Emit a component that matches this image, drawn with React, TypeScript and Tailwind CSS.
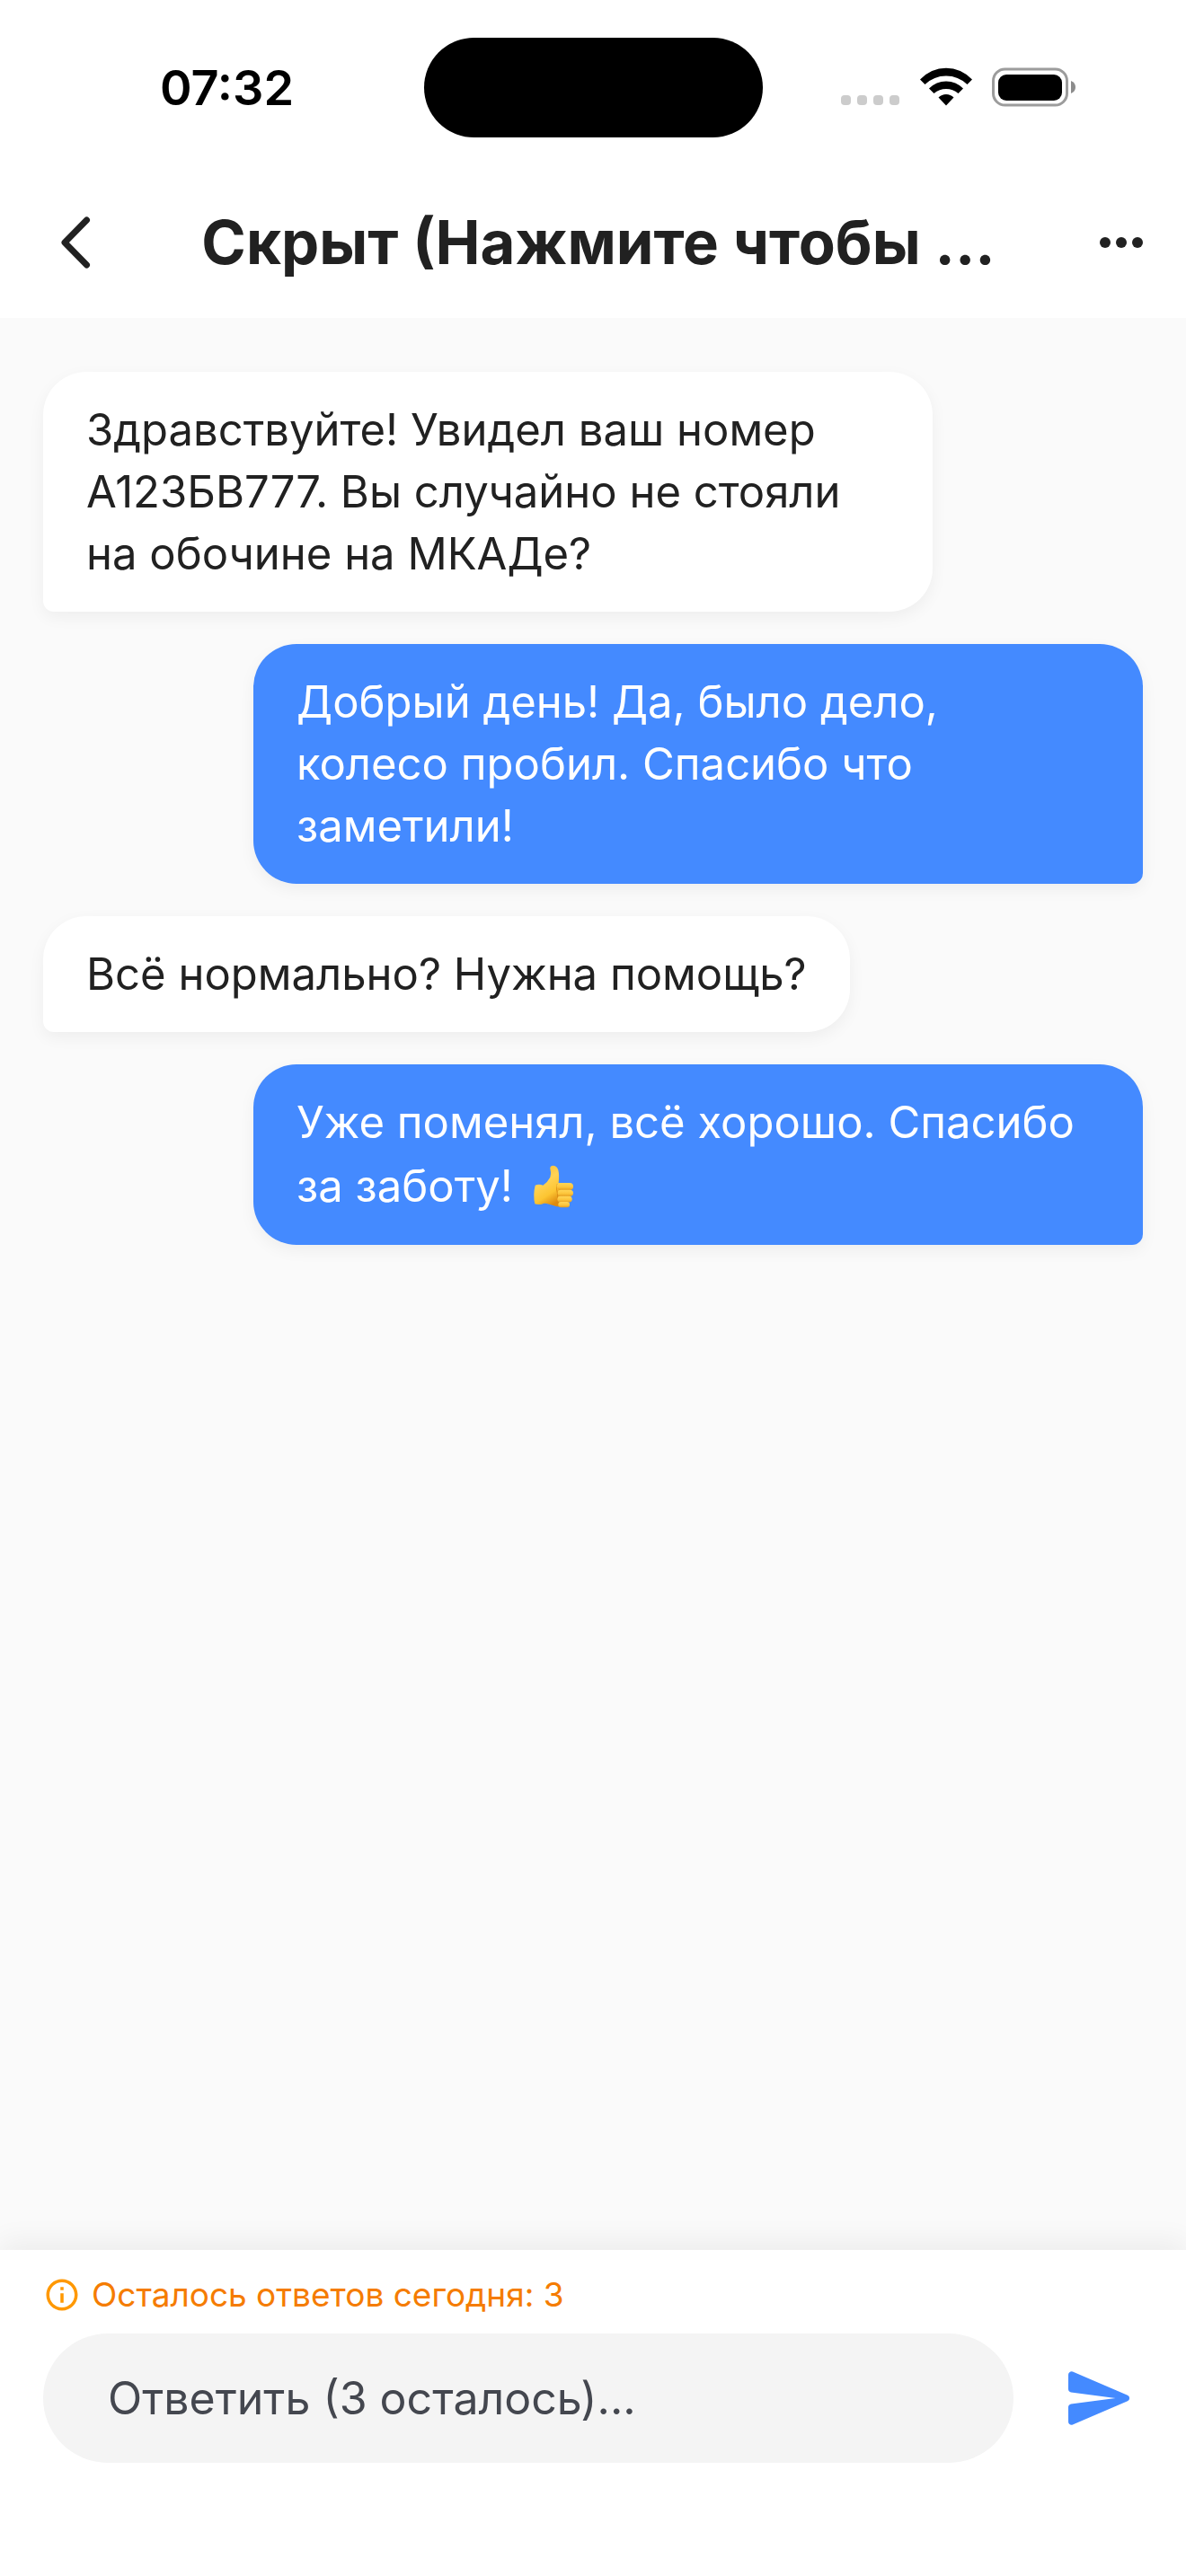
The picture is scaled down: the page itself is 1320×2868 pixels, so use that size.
import React, { useState } from 'react';

type Message = {
  id: number;
  text: string;
  mine?: boolean;
  thumb?: boolean;
};

const messages: Message[] = [
  { id: 1, text: 'Здравствуйте! Увидел ваш номер А123БВ777. Вы случайно не стояли на\u00a0обочине на МКАДе?' },
  { id: 2, text: 'Добрый день! Да, было дело, колесо\u00a0пробил. Спасибо что заметили!', mine: true },
  { id: 3, text: 'Всё нормально? Нужна помощь?' },
  { id: 4, text: 'Уже поменял, всё хорошо. Спасибо за\u00a0заботу!', mine: true, thumb: true },
];

const ThumbsUp: React.FC = () => (
  <svg viewBox="60 12 162 216" className="ml-1 inline h-[72px] w-[54px] align-[-18px]" role="img" aria-label="Палец вверх">
    <defs>
      <linearGradient id="hand" x1="0" y1="0" x2="0.5" y2="1">
        <stop offset="0" stopColor="#f7b92f" />
        <stop offset="0.45" stopColor="#ffd355" />
        <stop offset="0.75" stopColor="#fcc532" />
        <stop offset="1" stopColor="#de8a10" />
      </linearGradient>
      <linearGradient id="finger" x1="0" y1="0" x2="0" y2="1">
        <stop offset="0" stopColor="#ffd657" />
        <stop offset="0.6" stopColor="#fcc43a" />
        <stop offset="1" stopColor="#e39a1c" />
      </linearGradient>
    </defs>
    <path
      d="M80 119 Q92 114 106 119 Q122 108 130 92 Q135 78 130 64 Q128 54 141 53 Q153 54 157 68 Q161 85 158 111 L176 116 L180 188 Q158 194 142 187 Q128 183 118 180 Q110 177 102 182 Q88 185 79 181 Q72 152 80 119Z"
      fill="url(#hand)"
    />
    <path d="M154 114 Q149 130 155 150 Q151 168 160 188" fill="none" stroke="#d98b16" strokeWidth="3" />
    <rect x="152" y="111" width="55" height="24" rx="12" fill="url(#finger)" />
    <rect x="155" y="134" width="52" height="22" rx="11" fill="url(#finger)" />
    <rect x="154" y="155" width="49" height="21" rx="10" fill="url(#finger)" />
    <rect x="157" y="174" width="38" height="19" rx="9" fill="url(#finger)" />
  </svg>
);

const StatusBar: React.FC = () => (
  <div className="grid h-[186px] grid-cols-[1fr_auto_1fr] items-center pt-2">
    <span className="pl-[178px] text-[54px] font-semibold text-black">07:32</span>
    <div className="h-[111px] w-[377px] rounded-full bg-black" />
    <div className="flex items-center justify-end pr-[122px]">
      <svg viewBox="0 0 66 44" className="h-11 w-[66px]" fill="#cccccc">
        <rect x="0" y="31" width="11" height="11" rx="4" />
        <rect x="18" y="31" width="11" height="11" rx="4" />
        <rect x="36" y="31" width="11" height="11" rx="4" />
        <rect x="54" y="31" width="11" height="11" rx="4" />
      </svg>
      <svg viewBox="0 0 58 44" className="ml-[22px] h-11 w-[58px]">
        <path d="M0 13.5 Q12.500 .8 29 .8 Q45.500 .8 58 13.500 L52.500 19 Q42.500 9.500 29 9.500 Q15.500 9.500 5.500 19Z" />
        <path d="M10 23.500 Q18 15.500 29 15.500 Q40 15.500 48 23.500 L42.500 29 Q36.500 24 29 24 Q21.500 24 15.500 29Z" />
        <path d="M20.500 33.500 Q24 30 29 30 Q34 30 37.500 33.500 L29 42.500Z" />
      </svg>
      <svg viewBox="0 0 94 44" className="ml-[22px] h-11 w-[94px]">
        <rect x="1.500" y="2" width="82" height="40" rx="13" fill="none" stroke="#9c9c9c" strokeWidth="3" />
        <rect x="7" y="8" width="71" height="29" rx="9" />
        <path d="M88 15 Q93 17 93 22 Q93 27 88 29Z" fill="#8c8c8c" />
      </svg>
    </div>
  </div>
);

const ChatHeader: React.FC = () => (
  <div className="flex h-[168px] items-center">
    <button type="button" aria-label="Назад" className="flex h-full w-[156px] shrink-0 items-center justify-center pl-3">
      <svg viewBox="0 0 34 60" className="h-[60px] w-[34px]" fill="none" stroke="#212121" strokeWidth="7" strokeLinecap="round" strokeLinejoin="round">
        <path d="M29.500 5 L5 30 L29.500 55" />
      </svg>
    </button>
    <h1 className="min-w-0 flex-1 truncate text-center text-[67px] font-bold">Скрыт (Нажмите чтобы ...</h1>
    <button type="button" aria-label="Ещё" className="flex h-full w-36 shrink-0 items-center justify-center">
      <svg viewBox="0 0 48 12" className="h-3 w-12" fill="#212121">
        <circle cx="6" cy="6" r="6" />
        <circle cx="24" cy="6" r="6" />
        <circle cx="42" cy="6" r="6" />
      </svg>
    </button>
  </div>
);

const Bubble: React.FC<{ message: Message }> = ({ message }) => (
  <li
    className={`max-w-[75vw] rounded-t-[48px] px-12 py-[30px] text-[49px] leading-[69px] shadow-[0_6px_18px_rgba(0,0,0,0.05)] ${
      message.mine
        ? 'self-end rounded-br-xl rounded-bl-[48px] bg-[#448aff] text-white'
        : 'self-start rounded-br-[48px] rounded-bl-xl bg-white'
    }`}
  >
    {message.text}
    {message.thumb && (
      <>
        {' '}
        <ThumbsUp />
      </>
    )}
  </li>
);

const ReplyBar: React.FC = () => {
  const [reply, setReply] = useState('');

  return (
    <form
      className="bg-white pt-6 pr-6 pb-[126px] pl-12 shadow-[0_-9px_30px_rgba(0,0,0,0.06)]"
      onSubmit={(e) => e.preventDefault()}
    >
      <label htmlFor="reply" className="mb-[18px] flex items-center gap-3 text-[37px] leading-[51px] text-[#f57c00]">
        <svg viewBox="0 0 24 24" className="size-[42px]" fill="#ff9800">
          <path d="M11 7h2v2h-2zm0 4h2v6h-2zm1-9C6.480 2 2 6.480 2 12s4.480 10 10 10 10-4.480 10-10S17.520 2 12 2zm0 18c-4.410 0-8-3.590-8-8s3.590-8 8-8 8 3.590 8 8-3.590 8-8 8z" />
        </svg>
        Осталось ответов сегодня: 3
      </label>
      <div className="flex items-center gap-6">
        <input
          id="reply"
          type="text"
          value={reply}
          onChange={(e) => setReply(e.target.value)}
          placeholder="Ответить (3 осталось)..."
          className="h-36 min-w-0 flex-1 rounded-full bg-[#f4f4f4] px-[72px] text-[50px] outline-none placeholder:text-[#44474f]"
        />
        <button type="submit" aria-label="Отправить" className="flex size-36 shrink-0 items-center justify-center">
          <svg viewBox="0 0 24 24" className="size-[84px]" fill="#448aff">
            <path d="M3.400 20.400l17.450-7.480a1 1 0 000-1.840L3.400 3.600a.993.993 0 00-1.390.91L2 9.120c0 .5.370.93.870.99L17 12 2.870 13.880c-.5.070-.87.5-.87 1l.01 4.610c0 .71.730 1.200 1.390.91z" />
          </svg>
        </button>
      </div>
    </form>
  );
};

const App: React.FC = () => {
  return (
    <div className="flex min-h-screen flex-col bg-[#fafafa] font-['Inter','Noto_Sans',sans-serif] text-[#212121]">
      <header className="bg-white">
        <StatusBar />
        <ChatHeader />
      </header>
      <main className="flex-1 px-12 py-[60px]">
        <ul className="flex flex-col gap-9">
          {messages.map((message) => (
            <Bubble key={message.id} message={message} />
          ))}
        </ul>
      </main>
      <ReplyBar />
    </div>
  );
};

export default App;
